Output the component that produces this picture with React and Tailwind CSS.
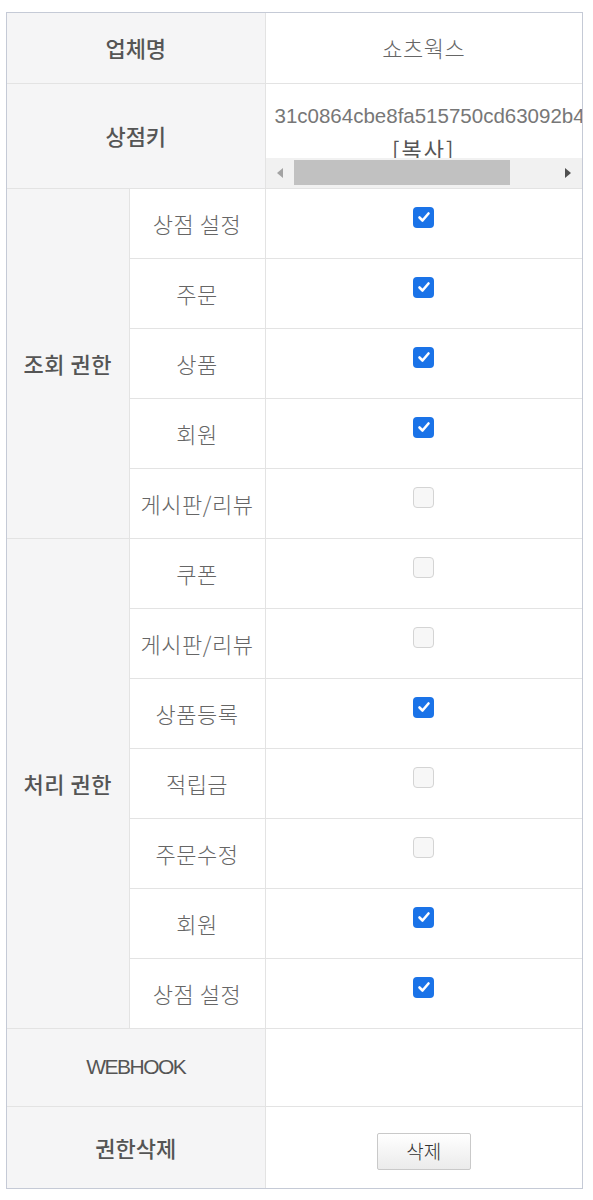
const KR = { fontFamily: '"Noto Sans CJK KR", "Noto Sans", sans-serif' }

const viewRows = [
  { label: '상점 설정', on: true },
  { label: '주문', on: true },
  { label: '상품', on: true },
  { label: '회원', on: true },
  { label: '게시판/리뷰', on: false },
]

const editRows = [
  { label: '쿠폰', on: false },
  { label: '게시판/리뷰', on: false },
  { label: '상품등록', on: true },
  { label: '적립금', on: false },
  { label: '주문수정', on: false },
  { label: '회원', on: true },
  { label: '상점 설정', on: true },
]

function Check({ on }) {
  if (!on) {
    return (
      <span className="inline-block w-[21px] h-[21px] rounded-[4px] border-[1.5px] border-[#d4d4d4] bg-[#f7f7f7] align-middle -translate-y-[8px]" />
    )
  }
  return (
    <span className="inline-flex items-center justify-center w-[21px] h-[21px] rounded-[4px] bg-[#1a73e8] align-middle -translate-y-[8px]">
      <svg width="14" height="14" viewBox="0 0 14 14" fill="none">
        <path d="M2.5 7.5l3 3 6-7" stroke="#fff" strokeWidth="2.6" strokeLinecap="round" strokeLinejoin="round" />
      </svg>
    </span>
  )
}

function Group({ title, rows }) {
  return rows.map((r, i) => (
    <tr key={i} className="h-[70px]">
      {i === 0 && (
        <td rowSpan={rows.length} className="bg-[#f5f5f6] border border-[#e3e3e3] text-center text-[22px] font-medium text-[#555] tracking-[0.5px]">
          {title}
        </td>
      )}
      <td className="border border-[#e3e3e3] text-center text-[22px] font-light text-[#666] tracking-[0.5px]">{r.label}</td>
      <td className="border border-[#e3e3e3] text-center">
        <Check on={r.on} />
      </td>
    </tr>
  ))
}

export default function App() {
  return (
    <div className="min-h-[1200px] bg-white pt-[12px] pl-[6px]" style={KR}>
      <div className="w-[577px] border border-[#c5cad6]">
        <table className="w-full table-fixed border-collapse border-hidden">
          <colgroup>
            <col className="w-[122px]" />
            <col className="w-[136px]" />
            <col className="w-[317px]" />
          </colgroup>
          <tbody>
            <tr className="h-[70px]">
              <td colSpan={2} className="bg-[#f5f5f6] border border-[#e3e3e3] text-center text-[22px] font-medium text-[#555]">
                업체명
              </td>
              <td className="border border-[#e3e3e3] text-center text-[22px] font-light text-[#666] tracking-[0.5px]">쇼츠웍스</td>
            </tr>
            <tr className="h-[104px]">
              <td colSpan={2} className="bg-[#f5f5f6] border border-[#e3e3e3] text-center text-[22px] font-medium text-[#555]">
                상점키
              </td>
              <td className="border border-[#e3e3e3] p-0">
                <div className="h-[74px] overflow-hidden">
                  <div className="pt-[16px] px-[9px] text-center whitespace-nowrap leading-[32px] text-[#777]">
                    <div className="text-[20.5px]" style={{ fontFamily: '"Liberation Sans", Arial, sans-serif' }}>
                      31c0864cbe8fa515750cd63092b4e1a7
                    </div>
                    <div className="text-[22px] text-[#555] tracking-[2px]">[복사]</div>
                  </div>
                </div>
                <div className="h-[30px] bg-[#f1f1f1] flex items-center px-[10px] gap-[10px]">
                  <svg width="8" height="12" viewBox="0 0 8 12">
                    <path d="M7 1L1 6l6 5z" fill="#a3a3a3" />
                  </svg>
                  <div className="h-[25px] w-[216px] bg-[#c1c1c1]" />
                  <div className="flex-1" />
                  <svg width="8" height="12" viewBox="0 0 8 12">
                    <path d="M1 1l6 5-6 5z" fill="#505050" />
                  </svg>
                </div>
              </td>
            </tr>
            <Group title="조회 권한" rows={viewRows} />
            <Group title="처리 권한" rows={editRows} />
            <tr className="h-[78px]">
              <td
                colSpan={2}
                className="bg-[#f5f5f6] border border-[#e3e3e3] text-center text-[21px] text-[#555] tracking-[-1.5px]"
                style={{ fontFamily: '"Liberation Sans", Arial, sans-serif' }}
              >
                WEBHOOK
              </td>
              <td className="border border-[#e3e3e3]"></td>
            </tr>
            <tr className="h-[82px]">
              <td colSpan={2} className="bg-[#f5f5f6] border border-[#e3e3e3] text-center text-[22px] font-medium text-[#555]">
                권한삭제
              </td>
              <td className="border border-[#e3e3e3] text-center">
                <button className="w-[94px] h-[37px] mt-[8px] border border-[#c9c9c9] rounded-[2px] bg-gradient-to-b from-white to-[#ebebeb] text-[19px] font-light text-[#333]">
                  삭제
                </button>
              </td>
            </tr>
          </tbody>
        </table>
      </div>
    </div>
  )
}
